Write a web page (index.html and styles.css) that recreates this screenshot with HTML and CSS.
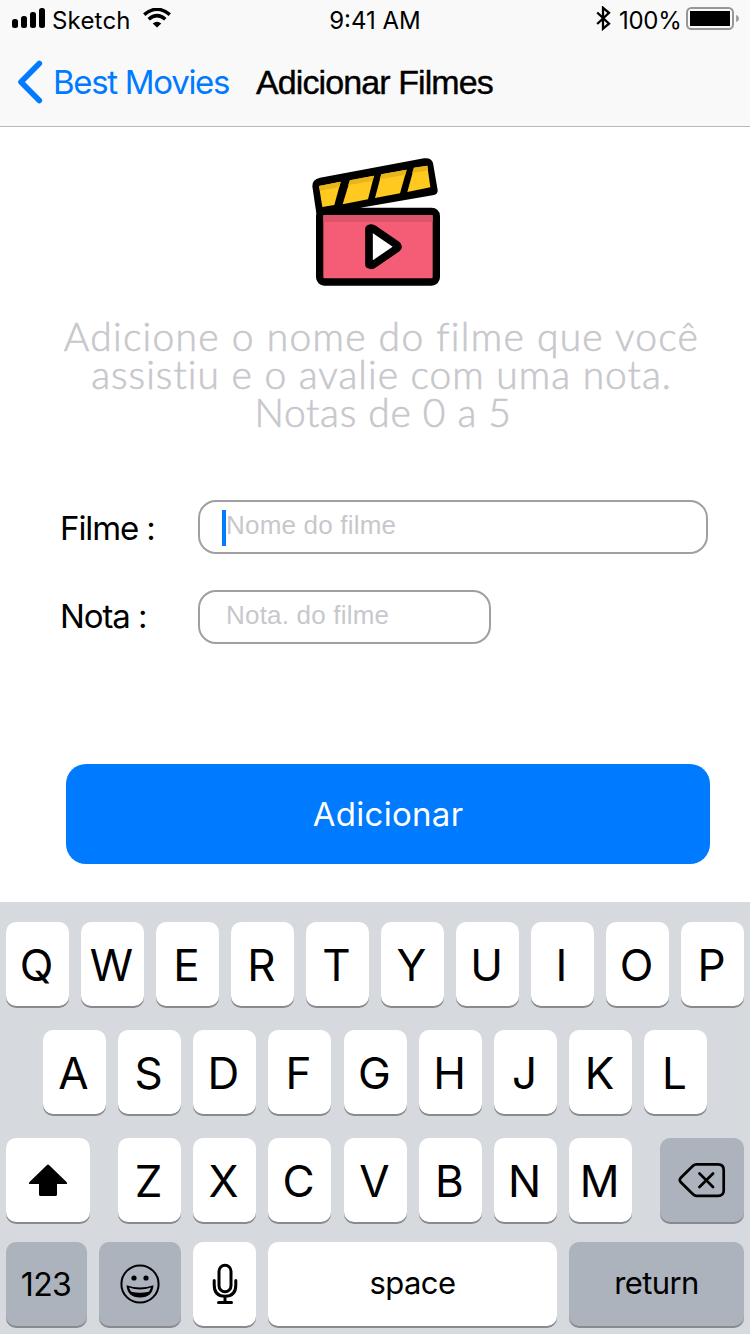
FILE: index.html
```html
<!DOCTYPE html>
<html lang="pt-BR">
<head>
<meta charset="utf-8">
<title>Adicionar Filmes</title>
<link rel="stylesheet" href="styles.css">
</head>
<body>
<div class="screen">
  <header class="top">
    <div class="status">
      <div class="status-left">
        <svg class="signal" width="34" height="20" viewBox="0 0 34 20"><rect x="0" y="11" width="6" height="9" rx="2.5"/><rect x="9" y="8" width="6" height="12" rx="2.5"/><rect x="18" y="4" width="6" height="16" rx="2.5"/><rect x="27" y="0" width="6" height="20" rx="2.5"/></svg>
        <span class="carrier">Sketch</span>
        <svg class="wifi" width="28" height="20" viewBox="0 0 28 20"><path d="M1.2 6.6Q14-4 26.800 6.600M5.700 11.200Q14 4 22.300 11.200" fill="none" stroke="#000" stroke-width="3.500"/><path d="M9.700 15.400Q14 12 18.300 15.400L14 19.600Z"/></svg>
      </div>
      <span class="clock">9:41 AM</span>
      <div class="status-right">
        <svg class="bluetooth" width="16" height="25" viewBox="0 0 16 25"><path d="M1.200 6.500L13 17.600 7 22.700V1.800L13 6.900 1.200 18" fill="none" stroke="#000" stroke-width="2.300"/></svg>
        <span class="charge">100%</span>
        <svg class="battery" width="53" height="23" viewBox="0 0 53 23"><rect x="1" y="1" width="46" height="21" rx="4.5" fill="none" stroke="#979797" stroke-width="2"/><rect x="4" y="4" width="40" height="15"/><path d="M50 8Q53 9 53 11.5T50 15Z" fill="#a0a0a0"/></svg>
      </div>
    </div>
    <nav class="nav">
      <svg class="chevron" width="26" height="44" viewBox="0 0 26 44"><path d="M22.300 3.500L4 22 22.300 40.500" fill="none" stroke="#007aff" stroke-width="5.600" stroke-linecap="round" stroke-linejoin="round"/></svg>
      <a class="back">Best Movies</a>
      <h1 class="title">Adicionar Filmes</h1>
    </nav>
  </header>
  <main class="content">
    <svg class="clapper" width="150" height="150" viewBox="0 0 450 450">
      <path d="M37 124Q36 103 60 98L372 40Q394 37 399 54L413 135Q414 147 402 150L190 187 85 212 49 205Z"/>
      <rect x="59" y="199" width="350" height="212" rx="14" fill="#f45d75" stroke="#000" stroke-width="22"/>
      <path d="M70 210H398V231H70Z" fill="#dc536a"/>
      <g fill="#ffc91f"><path d="M57 123L122 110 103 180 67 186Z"/><path d="M150 106L222 92 204 163 128 178Z"/><path d="M244 88L320 74 300 145 225 159Z"/><path d="M342 68L382 62 391 127 322 141Z"/></g>
      <g fill="#e8b51b"><path d="M57 123L122 110 118 126 60 137Z"/><path d="M150 106L222 92 218 107 144 121Z"/><path d="M244 88L320 74 316 89 239 103Z"/><path d="M342 68L382 62 384 76 336 84Z"/></g>
      <path d="M207 251Q215 247 221 252L291 300Q296 305 291 310L221 358Q215 363 207 359Z" fill="#fff" stroke="#000" stroke-width="23" stroke-linejoin="round"/>
    </svg>
    <p class="intro"><span class="l1">Adicione o nome do filme que você</span><span class="l2">assistiu e o avalie com uma nota.</span><span class="l3">Notas de 0 a 5</span></p>
    <div class="form">
      <div class="field"><span class="label film">Filme :</span><div class="input wide"><i class="caret"></i><span>Nome do filme</span></div></div>
      <div class="field"><span class="label score">Nota :</span><div class="input short"><i class="caret hidden"></i><span>Nota. do filme</span></div></div>
    </div>
    <div class="submit"><span>Adicionar</span></div>
  </main>
  <section class="keyboard">
    <div class="row row1"><b>Q</b><b>W</b><b>E</b><b>R</b><b>T</b><b>Y</b><b>U</b><b>I</b><b>O</b><b>P</b></div>
    <div class="row row2"><b>A</b><b>S</b><b>D</b><b>F</b><b>G</b><b>H</b><b>J</b><b>K</b><b>L</b></div>
    <div class="row row3">
      <b class="shift"><svg width="40" height="34" viewBox="0 0 40 34"><path d="M19 1Q20 0 21 1L38.500 18Q40 20 38 20H29V30.500Q29 32 27.500 32H12.500Q11 32 11 30.500V20H2Q0 20 1.500 18Z"/></svg></b>
      <b>Z</b><b>X</b><b>C</b><b>V</b><b>B</b><b>N</b><b>M</b>
      <b class="gray delete"><svg width="48" height="36" viewBox="0 0 48 36"><path d="M18.500 2.300H40Q45.700 2.300 45.700 8V28.500Q45.700 33.800 40 33.800H18.500Q16.500 33.800 15 32.300L2.600 20Q1 18 2.600 16L15 3.800Q16.500 2.300 18.500 2.300ZM21.500 11.500L35 25M35 11.500L21.500 25" fill="none" stroke="#000" stroke-width="2.700" stroke-linecap="round"/></svg></b>
    </div>
    <div class="row row4">
      <b class="gray num"><span>123</span></b>
      <b class="gray emoji"><svg width="40" height="40" viewBox="0 0 40 40"><circle cx="20" cy="20" r="18.600" fill="none" stroke="#000" stroke-width="2"/><circle cx="14" cy="14" r="2.600"/><circle cx="26" cy="14" r="2.600"/><path d="M6.500 21.200Q20 26 33.500 21.200Q32.500 33.500 20 33.500T6.500 21.200Z"/><path d="M9 23.500Q20 27.300 31 23.500Q30.300 25.800 28.700 27.700Q20 30 11.300 27.700Q9.700 25.800 9 23.500Z" fill="#acb3bd"/></svg></b>
      <b class="mic"><svg width="26" height="42" viewBox="0 0 26 42"><g fill="none" stroke="#000" stroke-width="3" stroke-linecap="round"><rect x="7" y="2.200" width="12" height="26.500" rx="6"/><path d="M2.200 17.500V22Q2.200 33.300 13 33.300T23.800 22V17.500M13 33.500V39M6.500 39.500H19.500"/></g></svg></b>
      <b class="space"><span>space</span></b>
      <b class="gray return"><span>return</span></b>
    </div>
  </section>
</div>
</body>
</html>
```

FILE: styles.css
```css
* { box-sizing: border-box; }
body { margin: 0; background: #fff; color: #000; font-family: Inter, "Liberation Sans", sans-serif; }
svg { display: block; flex: none; }
span, a { white-space: nowrap; }
.screen { width: 750px; height: 1334px; display: flex; flex-direction: column; overflow: hidden; }

.top { height: 127px; background: #f9f9f9; border-bottom: 1px solid #b9b9b9; flex: none; }
.status { height: 40px; display: grid; grid-template-columns: 1fr auto 1fr; font-size: 24px; line-height: 30px; padding-top: 6px; }
.status-left { display: flex; padding-left: 12px; }
.signal { margin-top: 2px; }
.carrier { width: 97px; padding-left: 6px; letter-spacing: 0.2px; }
.wifi { margin-top: 2px; }
.status-right { display: flex; justify-content: flex-end; padding-right: 11px; }
.bluetooth { margin-right: 7px; }
.charge { width: 67px; letter-spacing: -0.3px; }
.battery { margin-top: 1px; }
.nav { height: 86px; display: flex; align-items: flex-start; padding-left: 17px; }
.chevron { margin-top: 20px; }
.back { width: 213px; padding-left: 10px; padding-top: 21px; color: #007aff; font-size: 33px; line-height: 42px; letter-spacing: -1.3px; }
.title { margin: 0; padding-top: 21px; font: 400 34px/42px "Liberation Sans", sans-serif; letter-spacing: -0.9px; white-space: nowrap; -webkit-text-stroke: 0.4px #000; }

.content { height: 775px; padding-top: 18px; flex: none; }
.clapper { margin-left: 300px; }
.intro { margin: 22px 0 0; padding-left: 13px; display: flex; flex-direction: column; align-items: center; color: #c7c7cc; font: 300 39px/38px Lato, sans-serif; letter-spacing: 1px; -webkit-text-stroke: 0.6px #c7c7cc; }
.l1 { letter-spacing: 1.28px; }
.l3 { letter-spacing: 0.7px; padding-left: 3px; }
.form { margin-top: 69px; padding-left: 60px; display: grid; gap: 36px; }
.field { display: flex; height: 54px; }
.label { width: 138px; font-size: 33px; letter-spacing: -1.1px; }
.film { line-height: 56px; }
.score { line-height: 52px; }
.input { height: 54px; border: 2px solid #a0a0a0; border-radius: 18px; padding-left: 22px; padding-top: 8px; display: flex; font: 26px/30px "Liberation Sans", sans-serif; letter-spacing: 0.2px; color: #c7c7cc; }
.wide { width: 510px; }
.short { width: 293px; }
.caret { width: 4px; height: 36px; background: #007aff; }
.hidden { visibility: hidden; }
.submit { width: 644px; height: 100px; margin: 120px 0 0 66px; border-radius: 20px; background: #007aff; color: #fff; font-size: 33px; line-height: 101px; text-align: center; letter-spacing: 0.3px; }

.keyboard { flex: 1; background: #d6d9de; padding: 20px 6px 0; }
.row { display: grid; height: 84px; margin-bottom: 24px; column-gap: 12px; }
.row b { display: flex; align-items: center; justify-content: center; background: #fff; border-radius: 10px; box-shadow: 0 2px 0 #898a8d; font-weight: 400; font-size: 44px; padding: 1px 2px 0 0; }
.row .gray { background: #acb3bd; }
.row1 { grid-template-columns: repeat(10, 63px); }
.row2 { grid-template-columns: 63px 63px 63px 64px repeat(5, 63px); padding-left: 37px; }
.row2 b:nth-child(4) { margin-right: 1px; }
.row3 { grid-template-columns: 100px 63px 63px 64px 63px 63px 63px 79px 84px; margin-bottom: 20px; }
.row3 .shift { margin-right: 16px; padding-right: 0; }
.row3 b:nth-child(4) { margin-right: 1px; }
.row3 b:nth-child(8) { margin-right: 16px; }
.row3 .delete { padding: 0; }
.row4 { grid-template-columns: 81px 82px 63px 289px 175px; }
.row4 b { font-size: 32px; padding: 0; }
.row4 .num { letter-spacing: -0.6px; padding-right: 1px; }
.row4 .space, .row4 .return { font-size: 31px; letter-spacing: -0.6px; padding-bottom: 4px; }
```
